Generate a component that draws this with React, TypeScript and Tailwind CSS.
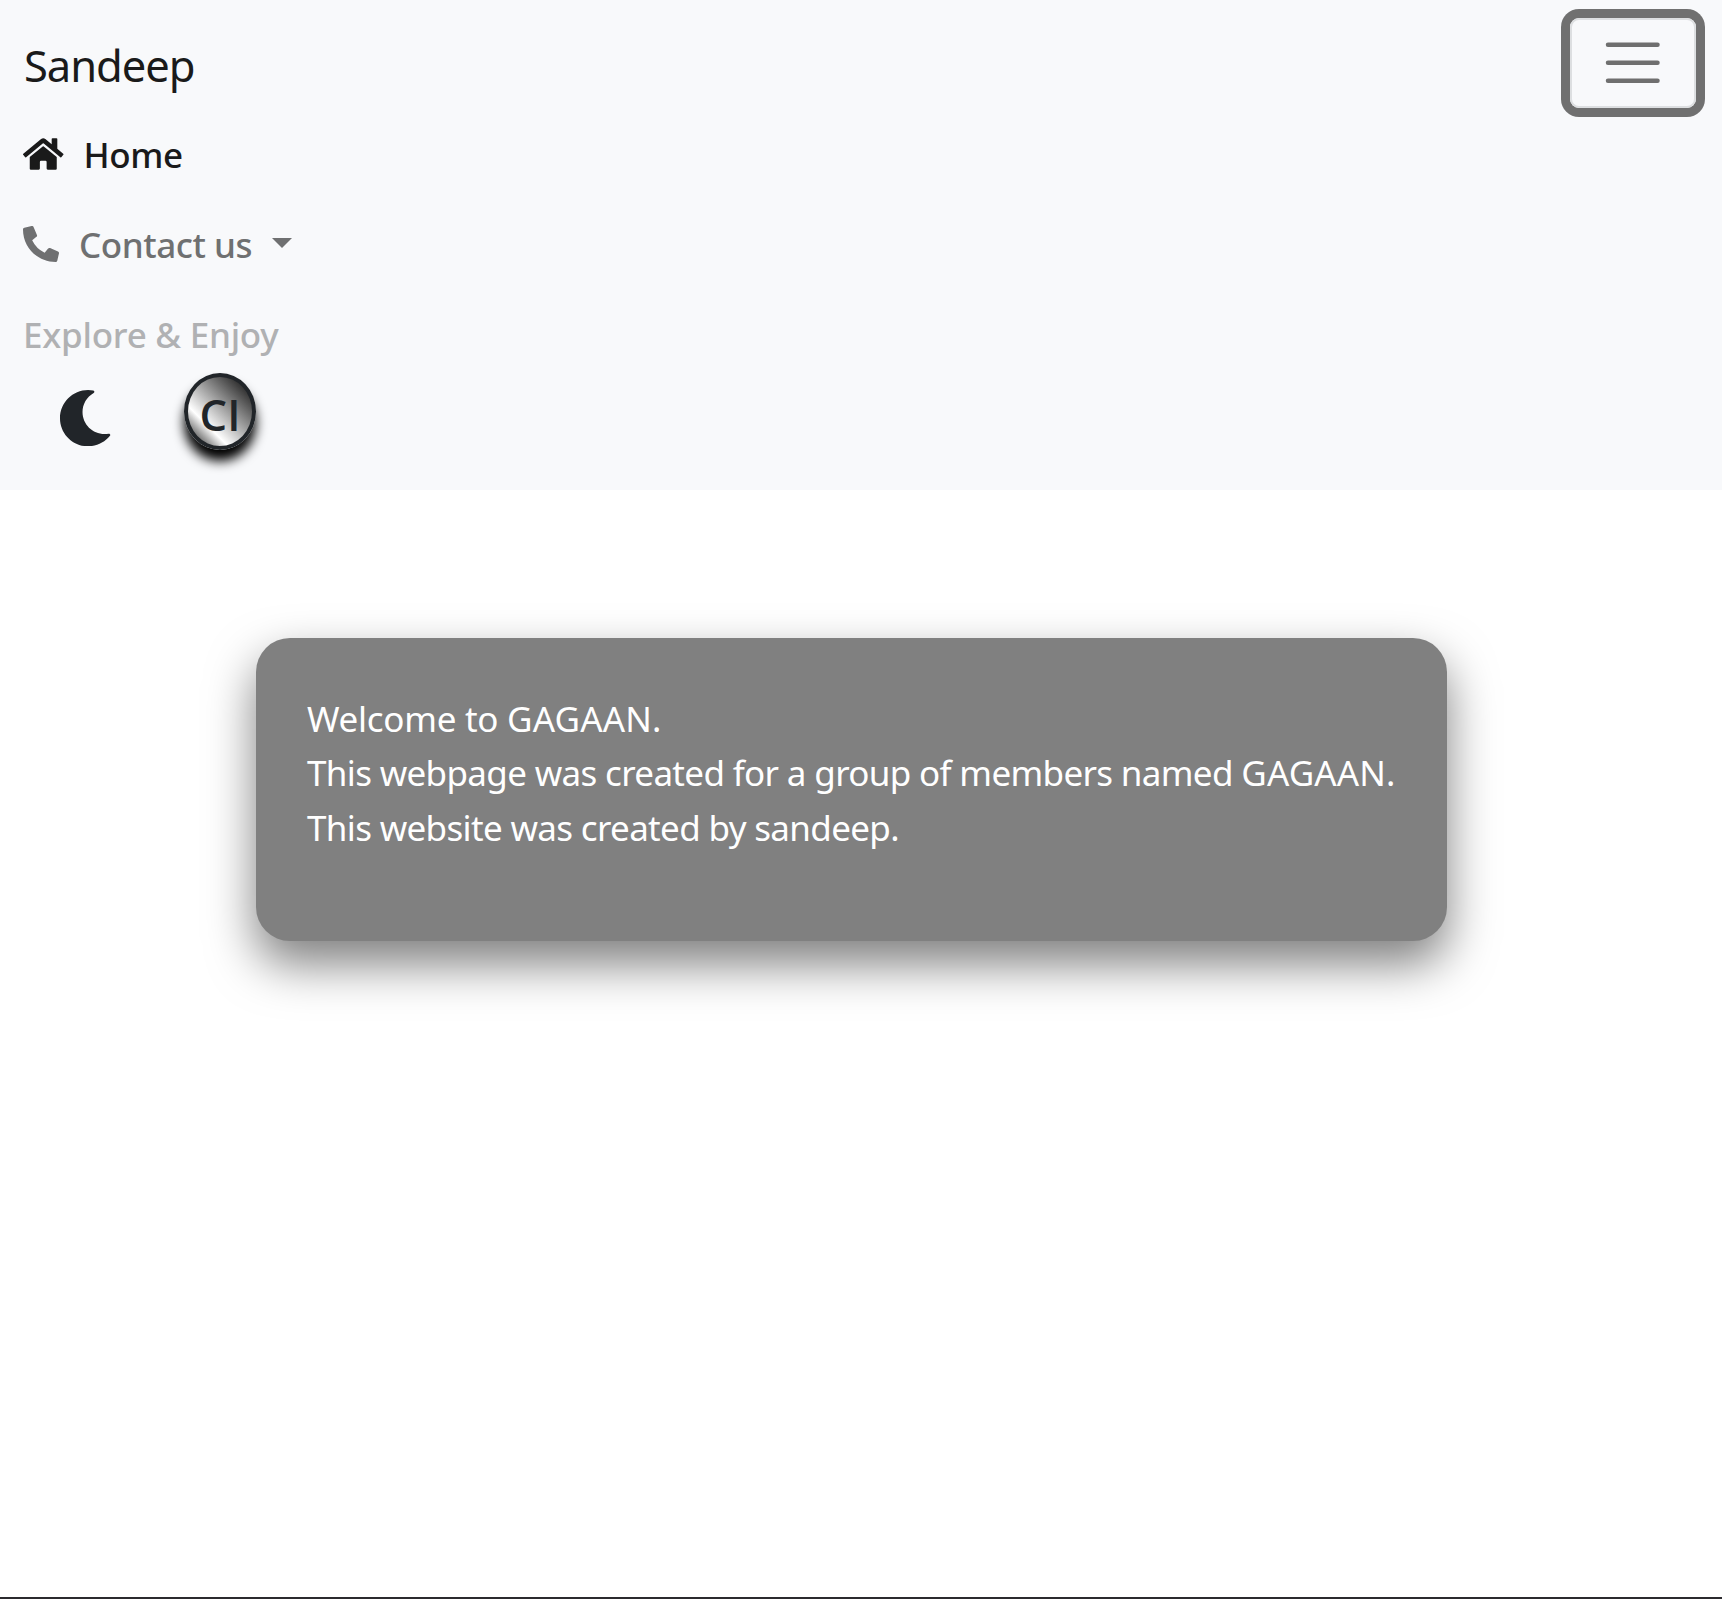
import { FaHome, FaMoon, FaPhoneAlt } from "react-icons/fa";

function GroupName() {
  return <span className="tracking-[0.15px]">GAGAAN.</span>;
}

export default function App() {
  return (
    <div className="flex h-[1599px] flex-col border-b-2 border-[#2b2a2e] bg-white font-['Noto_Sans',sans-serif]">
      <nav className="h-[490px] bg-[#f8f9fb]">
        <div className="flex h-[126px] items-start justify-between pl-[24px] pr-[26px]">
          <span className="mt-[32px] text-[43.5px] leading-[67px] tracking-[-1.05px] text-[#1a1a1a]">Sandeep</span>
          <button className="mt-[18px] flex h-[90px] w-[126px] items-center justify-center rounded-[9px] border-2 border-[#dddfe1] ring-9 ring-[#707070]">
            <svg viewBox="0 0 30 30" className="size-[67.5px]" stroke="#6f6f6f" strokeWidth="2" strokeLinecap="round">
              <path d="M4 7h22M4 15h22M4 23h22" />
            </svg>
          </button>
        </div>
        <ul className="flex flex-col pl-[23px] text-[35px] leading-[54px] font-medium">
          <li className="flex h-[90px] items-start pt-[2px] text-[#1a1a1a]">
            <FaHome className="mt-[8px] h-[36px] w-[40.5px]" />
            <span className="ml-[20px] tracking-[-0.4px]">Home</span>
          </li>
          <li className="flex h-[90px] items-start pt-[2px] text-[#6f7071]">
            <FaPhoneAlt className="mt-[8px] size-[36px]" />
            <span className="ml-[20px] w-[173px] tracking-[-0.45px] whitespace-nowrap">Contact us</span>
            <span className="mt-[20px] ml-[20px] border-x-[10.5px] border-t-[10.5px] border-x-transparent" />
          </li>
          <li className="flex h-[68px] items-start pt-[2px] text-[#b0b1b3]">
            <span className="tracking-[-0.25px]">Explore &amp; Enjoy</span>
          </li>
        </ul>
        <div className="flex items-start pl-[57px] text-[#212529]">
          <FaMoon className="mt-[16px] size-[56.25px]" />
          <button className="-mt-px ml-[70.5px] flex h-[77px] w-[72.5px] items-center justify-center rounded-[50%] border-4 border-[#212529] bg-[linear-gradient(45deg,black,white_30%,black)] pt-[6px] font-['Open_Sans',sans-serif] text-[43.5px] font-semibold shadow-[0_11.25px_11.25px_black]">
            CI
          </button>
        </div>
      </nav>
      <main className="mt-[148px] ml-[255.5px] flex h-[303px] w-[1191px] flex-col rounded-[34px] bg-[#808080] pt-[54px] pl-[51.5px] text-[35px] leading-[54.4px] whitespace-nowrap text-white shadow-[0_22.5px_48px_rgba(0,0,0,0.5)]">
        <p className="tracking-[-0.27px]">Welcome to <GroupName /></p>
        <p className="tracking-[-0.66px]">This webpage was created for a group of members named <GroupName /></p>
        <p className="tracking-[-0.66px]">This website was created by sandeep.</p>
      </main>
    </div>
  );
}
